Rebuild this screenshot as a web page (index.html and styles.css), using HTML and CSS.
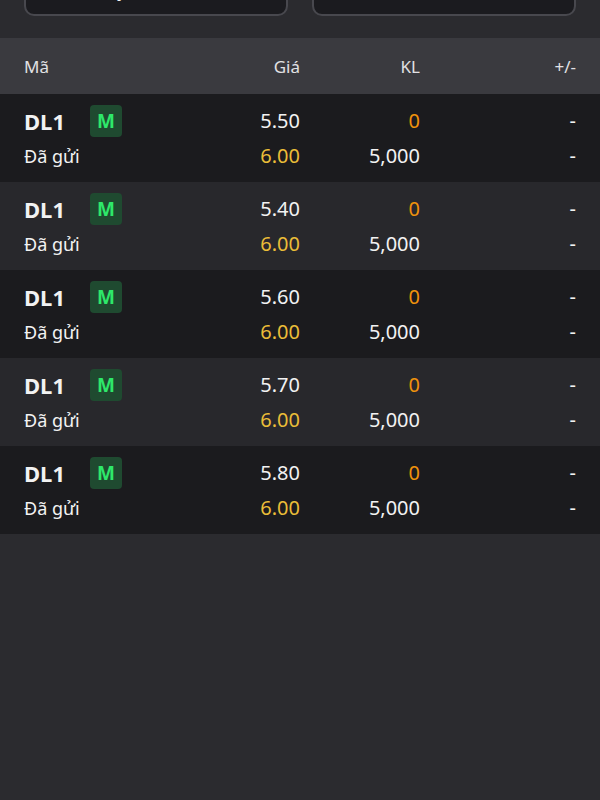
FILE: index.html
```html
<!DOCTYPE html>
<html lang="vi">

<head>
    <meta charset="UTF-8">
    <meta name="viewport" content="width=device-width, initial-scale=1.0">
    <title>Sổ lệnh</title>
    <link rel="stylesheet" href="styles.css">
</head>

<body>
    <div class="top">
        <button class="tab">Hủy tất cả lệnh</button>
        <button class="tab">Sửa lệnh</button>
    </div>

    <div class="head">
        <span>Mã</span>
        <span class="num">Giá</span>
        <span class="num">KL</span>
        <span class="num">+/-</span>
    </div>

    <div class="list">
        <div class="row">
            <div class="code">DL1 <span class="badge">M</span></div>
            <div class="num">5.50</div>
            <div class="num orange">0</div>
            <div class="num">-</div>
            <div class="status">Đã gửi</div>
            <div class="num yellow">6.00</div>
            <div class="num">5,000</div>
            <div class="num">-</div>
        </div>
        <div class="row">
            <div class="code">DL1 <span class="badge">M</span></div>
            <div class="num">5.40</div>
            <div class="num orange">0</div>
            <div class="num">-</div>
            <div class="status">Đã gửi</div>
            <div class="num yellow">6.00</div>
            <div class="num">5,000</div>
            <div class="num">-</div>
        </div>
        <div class="row">
            <div class="code">DL1 <span class="badge">M</span></div>
            <div class="num">5.60</div>
            <div class="num orange">0</div>
            <div class="num">-</div>
            <div class="status">Đã gửi</div>
            <div class="num yellow">6.00</div>
            <div class="num">5,000</div>
            <div class="num">-</div>
        </div>
        <div class="row">
            <div class="code">DL1 <span class="badge">M</span></div>
            <div class="num">5.70</div>
            <div class="num orange">0</div>
            <div class="num">-</div>
            <div class="status">Đã gửi</div>
            <div class="num yellow">6.00</div>
            <div class="num">5,000</div>
            <div class="num">-</div>
        </div>
        <div class="row">
            <div class="code">DL1 <span class="badge">M</span></div>
            <div class="num">5.80</div>
            <div class="num orange">0</div>
            <div class="num">-</div>
            <div class="status">Đã gửi</div>
            <div class="num yellow">6.00</div>
            <div class="num">5,000</div>
            <div class="num">-</div>
        </div>
    </div>
</body>

</html>
```

FILE: styles.css
```css
html,
body {
    margin: 0;
    height: 100%;
    background-color: rgb(43, 43, 47);
    font-family: "Noto Sans", "Open Sans", sans-serif;
    color: rgb(242, 242, 242);
}

.top {
    height: 38px;
    padding: 0 24px;
    display: flex;
    gap: 24px;
    align-items: flex-end;
    overflow: hidden;
}

.tab {
    flex: 1;
    height: 48px;
    margin-bottom: 22px;
    padding: 0 0 4px;
    background-color: rgb(27, 27, 31);
    border: 2px solid rgb(72, 72, 78);
    border-radius: 10px;
    color: rgb(242, 242, 242);
    font-family: inherit;
    font-size: 18px;
    line-height: 22px;
}

.head {
    height: 56px;
    padding: 0 24px;
    display: grid;
    grid-template-columns: 156px 120px 120px 156px;
    align-items: center;
    background-color: rgb(58, 58, 63);
    font-size: 17px;
    color: rgb(225, 225, 228);
}

.row {
    padding: 9px 24px;
    display: grid;
    grid-template-columns: 156px 120px 120px 156px;
    grid-auto-rows: 35px;
    align-items: center;
    background-color: rgb(27, 27, 30);
    font-size: 20px;
}

.row:nth-child(even) {
    background-color: rgb(40, 40, 44);
}

.num {
    text-align: right;
}

.code {
    display: flex;
    align-items: center;
    gap: 25px;
    font-size: 22px;
    font-weight: bold;
}

.badge {
    width: 32px;
    height: 32px;
    border-radius: 4px;
    background-color: rgb(31, 74, 48);
    color: rgb(46, 232, 106);
    font-size: 19px;
    line-height: 32px;
    text-align: center;
}

.status {
    font-size: 18px;
}

.orange {
    color: rgb(240, 146, 12);
}

.yellow {
    color: rgb(234, 189, 56);
}
```
